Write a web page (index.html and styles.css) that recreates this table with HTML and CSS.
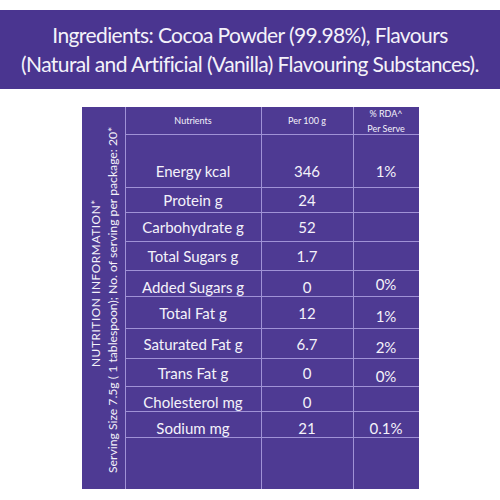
FILE: index.html
```html
<!DOCTYPE html>
<html lang="en">
<head>
    <meta charset="UTF-8">
    <title>Nutrition Information</title>
    <link rel="stylesheet" href="styles.css">
</head>
<body>
<div class="ingredients">
    <p>Ingredients: Cocoa Powder (99.98%), Flavours<br>(Natural and Artificial (Vanilla) Flavouring Substances).</p>
</div>
<div class="nutri">
    <div class="nutri-side">
        <div class="nutri-side__title">NUTRITION INFORMATION*</div>
        <div class="nutri-side__serving">Serving Size 7.5g ( 1 tablespoon); No. of serving per package: 20*</div>
    </div>

    <div class="nutri-cell head">Nutrients</div>
    <div class="nutri-cell head">Per 100 g</div>
    <div class="nutri-cell head">% RDA^<br>Per Serve</div>

    <div class="nutri-cell energy">Energy kcal</div>
    <div class="nutri-cell energy">346</div>
    <div class="nutri-cell energy">1%</div>

    <div class="nutri-cell">Protein g</div>
    <div class="nutri-cell">24</div>
    <div class="nutri-cell"></div>

    <div class="nutri-cell">Carbohydrate g</div>
    <div class="nutri-cell">52</div>
    <div class="nutri-cell"></div>

    <div class="nutri-cell">Total Sugars g</div>
    <div class="nutri-cell">1.7</div>
    <div class="nutri-cell"></div>

    <div class="nutri-cell down">Added Sugars g</div>
    <div class="nutri-cell down">0</div>
    <div class="nutri-cell">0%</div>

    <div class="nutri-cell">Total Fat g</div>
    <div class="nutri-cell">12</div>
    <div class="nutri-cell down">1%</div>

    <div class="nutri-cell">Saturated Fat g</div>
    <div class="nutri-cell">6.7</div>
    <div class="nutri-cell down">2%</div>

    <div class="nutri-cell">Trans Fat g</div>
    <div class="nutri-cell">0</div>
    <div class="nutri-cell down">0%</div>

    <div class="nutri-cell down">Cholesterol mg</div>
    <div class="nutri-cell down">0</div>
    <div class="nutri-cell"></div>

    <div class="nutri-cell down">Sodium mg</div>
    <div class="nutri-cell down">21</div>
    <div class="nutri-cell down">0.1%</div>

    <div class="nutri-cell last"></div>
    <div class="nutri-cell last"></div>
    <div class="nutri-cell last"></div>
</div>
</body>
</html>
```

FILE: styles.css
```css
body {
    margin: 0;
    background: #fff;
    font-family: Lato, "Open Sans", sans-serif;
    color: #f4f2fa;
}
.ingredients {
    margin-top: 10px;
    height: 79px;
    box-sizing: border-box;
    padding-top: 10px;
    background-color: #4a3590;
}
.ingredients p {
    margin: 0;
    font-size: 21px;
    letter-spacing: -0.6px;
    line-height: 29px;
    text-align: center;
    white-space: nowrap;
}
.nutri {
    width: 337px;
    margin: 18px auto 0;
    display: grid;
    grid-template-columns: 43px 136px 92px 66px;
    grid-template-rows: 28px 53px 25px 29px 29px 26px 32px 30px 28px 25px 26px 51px;
    background-color: #4e3a93;
}
.nutri-side {
    grid-row: 1 / -1;
    writing-mode: vertical-rl;
    transform: rotate(180deg);
    text-align: center;
    font-size: 12.2px;
    line-height: 17px;
    padding-right: 5px;
}
.nutri-side__title {
    padding-top: 30px;
    font-size: 11.8px;
    letter-spacing: 0.6px;
}
.nutri-side__serving {
    padding-bottom: 4px;
}
.nutri-cell {
    display: flex;
    align-items: center;
    justify-content: center;
    text-align: center;
    border-left: 1px solid #a092d6;
    border-bottom: 1px solid #a092d6;
    font-size: 15px;
}
.nutri-cell.head {
    font-size: 9px;
    line-height: 15px;
}
.nutri-cell.energy {
    padding-top: 20px;
}
.nutri-cell.down {
    padding-top: 6px;
}
.nutri-cell.last {
    border-bottom: 0;
}
```
